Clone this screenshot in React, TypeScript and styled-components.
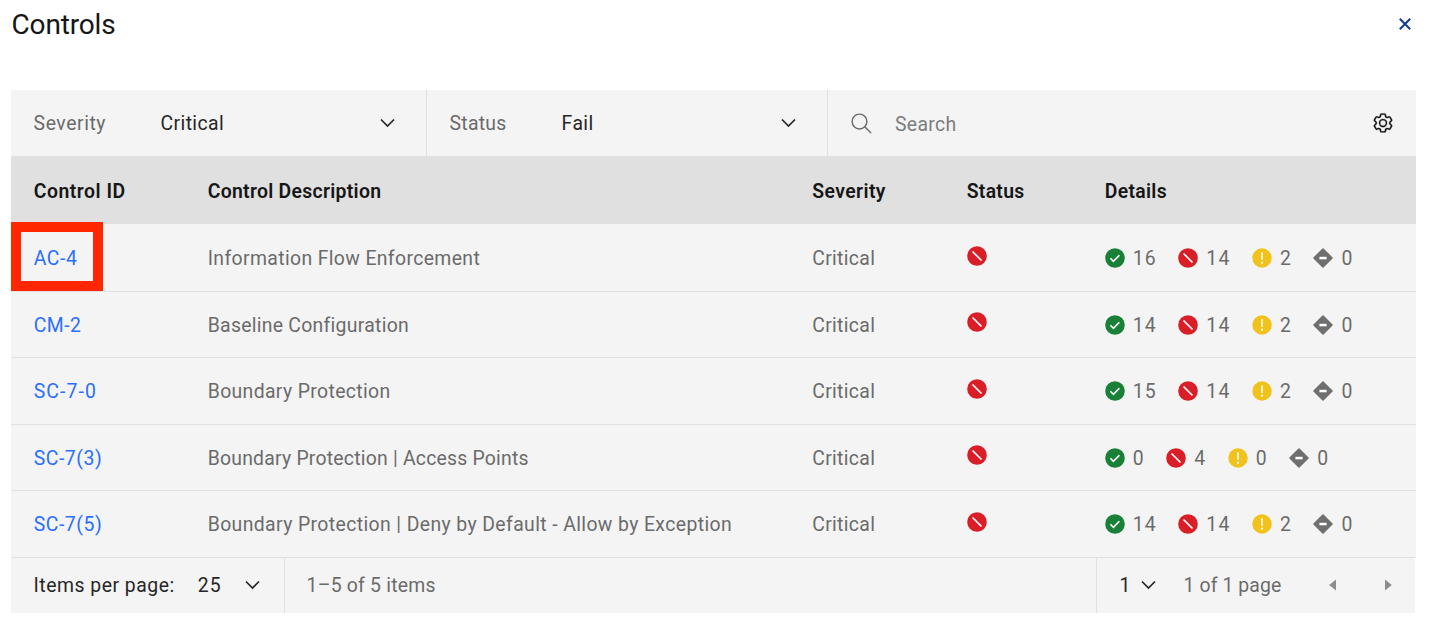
import React from "react";
import styled, { createGlobalStyle } from "styled-components";

const GlobalStyle = createGlobalStyle`
  *, *::before, *::after { box-sizing: border-box; }
  body {
    margin: 0;
    background: #ffffff;
    color: #161616;
    font-family: Roboto, "Liberation Sans", sans-serif;
    font-size: 19.4px;
    line-height: 24px;
  }
  svg { display: block; flex: none; }
`;

const Page = styled.main`
  width: 1430px;
  height: 635px;
  padding-left: 11px;
  overflow: hidden;
`;

const TitleBar = styled.header`
  display: flex;
  align-items: center;
  justify-content: space-between;
  height: 90px;
  padding: 0 19.5px 41px 0;
`;

const Title = styled.h1`
  margin: 0;
  padding-left: 0.5px;
  font-size: 28px;
  font-weight: 400;
  line-height: 36px;
  letter-spacing: -0.15px;
`;

const IconButton = styled.button`
  display: flex;
  padding: 0;
  border: 0;
  background: none;
  color: inherit;
`;

const CloseButton = styled(IconButton)`
  padding-bottom: 2px;
`;

const Panel = styled.section`
  width: 1405px;
`;

const Toolbar = styled.div`
  display: flex;
  height: 66px;
  background: #f4f4f4;
`;

const Filter = styled.div<{ $width: number; $labelWidth: number }>`
  display: grid;
  grid-template-columns: ${(p) => p.$labelWidth}px 1fr auto;
  align-items: center;
  width: ${(p) => p.$width}px;
  padding: 0 31px 0 22.6px;
  border-right: 1px solid #e0e0e0;
`;

const Text = styled.span<{ $spacing?: number; $tone?: string }>`
  padding-top: 2px;
  white-space: nowrap;
  letter-spacing: ${(p) => p.$spacing ?? 0.36}px;
  color: ${(p) => p.$tone ?? "#6b6b6b"};
`;

const SearchBox = styled.div`
  display: flex;
  flex: 1;
  align-items: center;
  gap: 23px;
  padding: 0 22px 0 23px;
`;

const SearchLabel = styled(Text)`
  flex: 1;
  padding-top: 3px;
`;

const Grid = styled.div`
  display: grid;
  grid-template-columns: 174px 604.5px 154.5px 138px 1fr;
  align-items: center;
  padding-left: 22.7px;
`;

const HeadRow = styled(Grid)`
  height: 68px;
  padding-top: 2px;
  background: #e0e0e0;
  font-weight: 600;
`;

const Body = styled.div`
  padding-top: 1px;
  background: #f4f4f4;
`;

const Row = styled(Grid)`
  height: 66.5px;
  padding-top: 1px;
  border-bottom: 1px solid #e0e0e0;
`;

const ControlLink = styled.a<{ $spacing: number }>`
  position: relative;
  justify-self: start;
  padding-top: 2px;
  color: #2a6fff;
  letter-spacing: ${(p) => p.$spacing}px;
`;

const Highlight = styled.span`
  position: absolute;
  left: -22.7px;
  top: -23px;
  width: 91.5px;
  height: 68.5px;
  border: 10px solid #ff2600;
`;

const StatusCell = styled.span`
  padding-bottom: 5px;
`;

const Details = styled.span`
  display: flex;
  gap: 21.4px;
`;

const Count = styled.span`
  display: flex;
  align-items: center;
  gap: 8px;
`;

const Footer = styled.footer`
  display: flex;
  width: 1404px;
  height: 55px;
  background: #f4f4f4;
`;

const PageSize = styled.div`
  display: flex;
  align-items: center;
  width: 274px;
  padding: 0 24.5px 0 22.6px;
  border-right: 1px solid #e0e0e0;
  & > :nth-child(2) { margin-left: 23.2px; }
  & > svg { margin-left: auto; }
`;

const Range = styled.div`
  display: flex;
  flex: 1;
  align-items: center;
  padding-left: 21.6px;
`;

const Pager = styled.div`
  display: flex;
  align-items: center;
  width: 319px;
  padding-left: 22.5px;
  border-left: 1px solid #e0e0e0;
`;

const PageSelect = styled.span`
  display: flex;
  align-items: center;
  gap: 10.3px;
  width: 64px;
`;

const PageCount = styled(Text)`
  width: 145px;
`;

const Arrows = styled.span`
  display: flex;
  gap: 49.3px;
`;

const Chevron = () => (
  <svg width="15" height="10" viewBox="0 0 15 10" fill="none" stroke="#262626" strokeWidth="1.7">
    <path d="M1 1.5 7.5 8 14 1.5" />
  </svg>
);

const CloseIcon = () => (
  <svg width="12" height="12" viewBox="0 0 12 12" fill="none" stroke="#123a8c" strokeWidth="2">
    <path d="M.8.8 11.2 11.2M11.2.8.8 11.2" />
  </svg>
);

const SearchIcon = () => (
  <svg width="21" height="21" viewBox="0 0 21 21" fill="none" stroke="#6b6b6b" strokeWidth="1.45">
    <circle cx="8.5" cy="8.5" r="7.4" />
    <path d="m13.7 13.7 6.3 6.2" />
  </svg>
);

const GearIcon = () => (
  <svg width="22" height="22" viewBox="0 0 32 32" fill="#161616" stroke="#161616" strokeWidth="0.3">
    <path d="M27,16.76c0-.25,0-.5,0-.76s0-.51,0-.77l1.92-1.68A2,2,0,0,0,29.3,11L26.94,7a2,2,0,0,0-1.73-1,2,2,0,0,0-.64.1l-2.43.82a11.35,11.35,0,0,0-1.31-.75l-.51-2.52a2,2,0,0,0-2-1.61H13.64a2,2,0,0,0-2,1.61l-.51,2.52a11.48,11.48,0,0,0-1.32.75L7.43,6.06A2,2,0,0,0,6.79,6,2,2,0,0,0,5.06,7L2.7,11a2,2,0,0,0,.41,2.51L5,15.24c0,.25,0,.5,0,.76s0,.51,0,.77L3.11,18.45A2,2,0,0,0,2.7,21L5.06,25a2,2,0,0,0,1.73,1,2,2,0,0,0,.64-.1l2.43-.82a11.35,11.35,0,0,0,1.31.75l.51,2.52a2,2,0,0,0,2,1.61h4.72a2,2,0,0,0,2-1.61l.51-2.52a11.48,11.48,0,0,0,1.32-.75l2.42.82a2,2,0,0,0,.64.1,2,2,0,0,0,1.73-1L29.3,21a2,2,0,0,0-.41-2.51ZM25.21,24l-3.43-1.16a8.86,8.86,0,0,1-2.71,1.57L18.36,28H13.64l-.71-3.55a9.36,9.36,0,0,1-2.7-1.57L6.79,24,4.43,20l2.72-2.4a8.9,8.9,0,0,1,0-3.13L4.43,12,6.79,8l3.43,1.16a8.86,8.86,0,0,1,2.71-1.57L13.64,4h4.72l.71,3.55a9.36,9.36,0,0,1,2.7,1.57L25.21,8,27.57,12l-2.72,2.4a8.9,8.9,0,0,1,0,3.13L27.57,20Z" />
    <path d="M16,22a6,6,0,1,1,6-6A5.94,5.94,0,0,1,16,22Zm0-10a3.91,3.91,0,0,0-4,4,3.91,3.91,0,0,0,4,4,3.91,3.91,0,0,0,4-4A3.91,3.91,0,0,0,16,12Z" />
  </svg>
);

const PassIcon = () => (
  <svg width="20" height="20" viewBox="0 0 20 20" fill="none">
    <circle cx="10" cy="10" r="9.8" fill="#198038" />
    <path d="m5.4 10.3 3 3 6-6" stroke="#fff" strokeWidth="1.6" />
  </svg>
);

const FailIcon = () => (
  <svg width="20" height="20" viewBox="0 0 20 20" fill="none">
    <circle cx="10" cy="10" r="9.8" fill="#da1e28" />
    <path d="m5.5 5.5 9 9" stroke="#fff" strokeWidth="1.7" />
  </svg>
);

const WarnIcon = () => (
  <svg width="20" height="20" viewBox="0 0 20 20">
    <circle cx="10" cy="10" r="9.7" fill="#f1c21b" />
    <path d="M9.25 4.3h1.5v7.6h-1.5z" fill="#fff" />
    <circle cx="10" cy="14.7" r="1.1" fill="#fff" />
  </svg>
);

const SkipIcon = () => (
  <svg width="20" height="20" viewBox="0 0 20 20">
    <path d="M10 1 19 10 10 19 1 10Z" fill="#6f6f6f" stroke="#6f6f6f" strokeWidth="1.6" strokeLinejoin="round" />
    <path d="M6.4 8.8h7.2v2.5H6.4z" fill="#fff" />
  </svg>
);

const ArrowIcon = ({ next = false }: { next?: boolean }) => (
  <svg width="7" height="12" viewBox="0 0 7 12" fill="#8d8d8d">
    <path d={next ? "M0 .4 6.8 6 0 11.6Z" : "M7 .4.2 6 7 11.6Z"} />
  </svg>
);

const DARK = "#262626";
const INK = "#161616";

const columns: [string, number][] = [
  ["Control ID", 0.52],
  ["Control Description", 0.3],
  ["Severity", 0.42],
  ["Status", 0.3],
  ["Details", 0.33],
];

interface Control {
  id: string;
  idSpacing: number;
  name: string;
  spacing: number;
  counts: [number, number, number, number];
  marked?: boolean;
}

const controls: Control[] = [
  { id: "AC-4", idSpacing: 0.6, name: "Information Flow Enforcement", spacing: 0.37, counts: [16, 14, 2, 0], marked: true },
  { id: "CM-2", idSpacing: 0.5, name: "Baseline Configuration", spacing: 0.28, counts: [14, 14, 2, 0] },
  { id: "SC-7-0", idSpacing: 1.1, name: "Boundary Protection", spacing: 0.36, counts: [15, 14, 2, 0] },
  { id: "SC-7(3)", idSpacing: 0.55, name: "Boundary Protection | Access Points", spacing: 0.22, counts: [0, 4, 0, 0] },
  { id: "SC-7(5)", idSpacing: 0.55, name: "Boundary Protection | Deny by Default - Allow by Exception", spacing: 0.39, counts: [14, 14, 2, 0] },
];

const countIcons = [PassIcon, FailIcon, WarnIcon, SkipIcon];

export default function App() {
  return (
    <Page>
      <GlobalStyle />
      <TitleBar>
        <Title>Controls</Title>
        <CloseButton aria-label="Close">
          <CloseIcon />
        </CloseButton>
      </TitleBar>
      <Panel>
        <Toolbar>
          <Filter $width={416} $labelWidth={127}>
            <Text $spacing={0.55}>Severity</Text>
            <Text $spacing={0.38} $tone={DARK}>Critical</Text>
            <Chevron />
          </Filter>
          <Filter $width={401} $labelWidth={112}>
            <Text $spacing={0.25}>Status</Text>
            <Text $spacing={0.4} $tone={DARK}>Fail</Text>
            <Chevron />
          </Filter>
          <SearchBox>
            <SearchIcon />
            <SearchLabel $spacing={0.3} $tone="#7d7d7d">Search</SearchLabel>
            <IconButton aria-label="Settings">
              <GearIcon />
            </IconButton>
          </SearchBox>
        </Toolbar>
        <HeadRow>
          {columns.map(([label, spacing]) => (
            <Text key={label} $spacing={spacing} $tone={INK}>{label}</Text>
          ))}
        </HeadRow>
        <Body>
          {controls.map((c) => (
            <Row key={c.id}>
              <ControlLink $spacing={c.idSpacing}>
                {c.id}
                {c.marked && <Highlight />}
              </ControlLink>
              <Text $spacing={c.spacing}>{c.name}</Text>
              <Text $spacing={0.34}>Critical</Text>
              <StatusCell>
                <FailIcon />
              </StatusCell>
              <Details>
                {c.counts.map((n, i) => {
                  const Icon = countIcons[i];
                  return (
                    <Count key={i}>
                      <Icon />
                      <Text $spacing={1.2}>{n}</Text>
                    </Count>
                  );
                })}
              </Details>
            </Row>
          ))}
        </Body>
        <Footer>
          <PageSize>
            <Text $spacing={0.5} $tone={DARK}>Items per page:</Text>
            <Text $spacing={1} $tone={DARK}>25</Text>
            <Chevron />
          </PageSize>
          <Range>
            <Text $spacing={0.22}>1–5 of 5 items</Text>
          </Range>
          <Pager>
            <PageSelect>
              <Text $tone={DARK}>1</Text>
              <Chevron />
            </PageSelect>
            <PageCount $spacing={0.12}>1 of 1 page</PageCount>
            <Arrows>
              <ArrowIcon />
              <ArrowIcon next />
            </Arrows>
          </Pager>
        </Footer>
      </Panel>
    </Page>
  );
}
